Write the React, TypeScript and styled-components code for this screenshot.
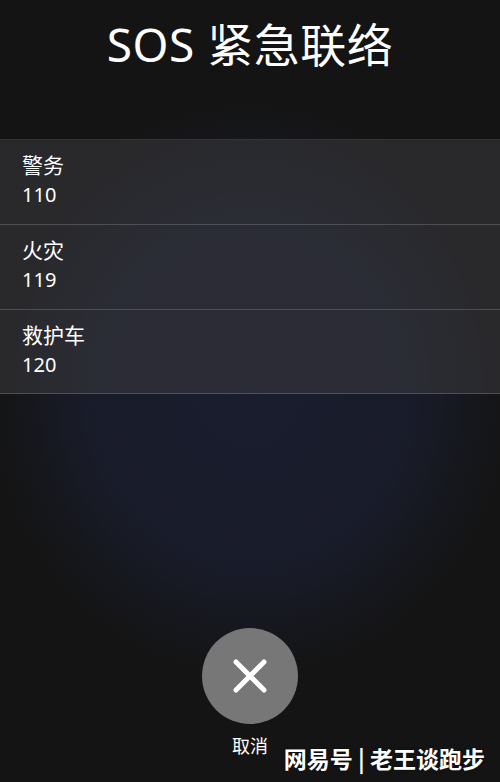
import React from 'react';
import styled, { createGlobalStyle } from 'styled-components';

const GlobalStyle = createGlobalStyle`
  html, body {
    margin: 0;
    padding: 0;
    background: #141414;
  }
  * {
    box-sizing: border-box;
  }
`;

const FONT = `'Noto Sans', 'Noto Sans CJK SC', sans-serif`;

const Screen = styled.div`
  position: relative;
  width: 500px;
  height: 782px;
  overflow: hidden;
  display: flex;
  flex-direction: column;
  font-family: ${FONT};
  color: #ffffff;
  background:
    radial-gradient(ellipse 265px 290px at 250px 390px, rgba(26, 29, 46, 1) 0%, rgba(25, 28, 43, 0.95) 60%, rgba(20, 20, 20, 0) 100%),
    #141414;
`;

const Header = styled.header`
  height: 139px;
  display: flex;
  justify-content: center;
  padding-top: 13px;
`;

const Title = styled.h1`
  margin: 0;
  font-size: 46px;
  font-weight: 400;
  line-height: 62px;
  letter-spacing: 0.5px;
`;

const List = styled.ul`
  list-style: none;
  margin: 0;
  padding: 0;
`;

const Row = styled.li`
  height: 85px;
  padding: 11px 22px 0;
  background: rgba(58, 58, 62, 0.55);
  border-top: 1px solid rgba(110, 110, 116, 0.55);
  display: flex;
  flex-direction: column;

  &:first-child {
    border-top-color: rgba(60, 60, 62, 0.6);
  }
  &:last-child {
    border-bottom: 1px solid rgba(110, 110, 116, 0.55);
  }
`;

const Name = styled.span`
  font-size: 21px;
  line-height: 29px;
`;

const Number = styled.span`
  font-size: 20px;
  line-height: 30px;
`;

const Spacer = styled.div`
  flex: 1;
`;

const Footer = styled.footer`
  display: flex;
  flex-direction: column;
  align-items: center;
  padding-bottom: 24px;
  gap: 10px;
`;

const CancelButton = styled.button`
  width: 96px;
  height: 96px;
  border-radius: 50%;
  border: none;
  background: #777777;
  display: flex;
  align-items: center;
  justify-content: center;
  padding: 0;
  cursor: pointer;
`;

const CancelLabel = styled.span`
  font-size: 18px;
  line-height: 24px;
  color: #ffffff;
`;

const Watermark = styled.div`
  position: absolute;
  right: 15px;
  bottom: 9px;
  font-family: 'Noto Sans CJK SC', sans-serif;
  font-size: 23px;
  font-weight: 700;
  line-height: 30px;
  color: #ffffff;
  text-shadow: 0 0 2px rgba(0, 0, 0, 0.6);
`;

const contacts = [
  { name: '警务', number: '110' },
  { name: '火灾', number: '119' },
  { name: '救护车', number: '120' },
];

export default function App() {
  return (
    <>
      <GlobalStyle />
      <Screen>
        <Header>
          <Title>SOS 紧急联络</Title>
        </Header>
        <List>
          {contacts.map((c) => (
            <Row key={c.number}>
              <Name>{c.name}</Name>
              <Number>{c.number}</Number>
            </Row>
          ))}
        </List>
        <Spacer />
        <Footer>
          <CancelButton aria-label="取消">
            <svg width="34" height="34" viewBox="0 0 34 34">
              <path d="M3 3 L31 31 M31 3 L3 31" stroke="#ffffff" strokeWidth="5" strokeLinecap="round" />
            </svg>
          </CancelButton>
          <CancelLabel>取消</CancelLabel>
        </Footer>
        <Watermark>网易号 | 老王谈跑步</Watermark>
      </Screen>
    </>
  );
}
